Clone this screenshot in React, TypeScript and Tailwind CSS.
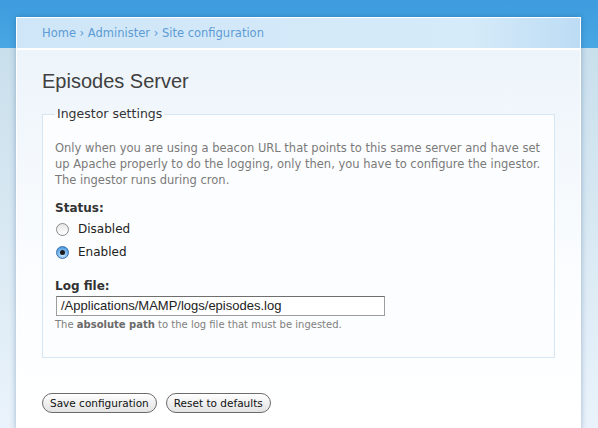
import React from 'react';

const Radio = ({ checked }: { checked?: boolean }) => (
  <span
    className={`flex h-[13px] w-[13px] items-center justify-center rounded-full border ${
      checked
        ? 'border-[#3a6fa8] bg-[radial-gradient(circle_at_50%_70%,#cfeaff_0%,#6fb2ec_55%,#2f7fd0_100%)]'
        : 'border-[#8a8a8a] bg-[linear-gradient(to_bottom,#e6e6e6,#ffffff)]'
    }`}
  >
    {checked && <span className="h-[5px] w-[5px] rounded-full bg-[#1a1a1a]" />}
  </span>
);

const PillButton = ({ label }: { label: string }) => (
  <button className="h-[20px] rounded-full border border-[#6b6b6b] bg-[linear-gradient(to_bottom,#ffffff,#f0f0f0_50%,#e3e3e3)] px-[7px] text-[10.5px] leading-[18px] text-[#111]">
    {label}
  </button>
);

export default function App() {
  return (
    <div className="h-[428px] w-[598px] overflow-hidden bg-[linear-gradient(to_bottom,#3e9cdf_0px,#49a7e3_48px,#c9dfec_48px,#eaf3fb_428px)] pt-[17px] font-['DejaVu_Sans',sans-serif]">
      <div className="ml-[16px] w-[565px] shadow-[0_0_6px_rgba(20,70,120,0.35)]">
        {/* Breadcrumb band */}
        <div className="h-[33px] border-x border-t border-white border-b-2 border-b-white bg-[linear-gradient(to_right,#cfe6f8,#d6ebf9_80%,#bcdcf4)] px-[25px] text-[11.5px] leading-[31px] text-[#5d9bd4]">
          Home › Administer › Site configuration
        </div>

        {/* Content */}
        <div className="h-[380px] border-x border-white bg-[linear-gradient(to_bottom,#edf4fa,#fbfdff_60%,#ffffff)] px-[25px] pt-[16px]">
          <h1 className="font-['Liberation_Sans',sans-serif] text-[20px] leading-[30px] text-[#404040]">
            Episodes Server
          </h1>

          <fieldset className="mt-[10px] h-[252px] border border-[#d6e6f3] bg-[#fcfdfe] px-[12px]">
            <legend className="px-[2px] text-[12.5px] leading-[16px] text-[#333]">Ingestor settings</legend>
            <p className="mt-[18px] text-[11.5px] leading-[16px] text-[#7a7a7a]">
              Only when you are using a beacon URL that points to this same server and have set up Apache properly to do the logging, only then, you have to configure the ingestor. The ingestor runs during cron.
            </p>

            <div className="mt-[12px] text-[12px] font-bold leading-[16px] text-[#333]">Status:</div>
            <div className="mt-[6px] flex flex-col gap-[9px] pl-[1px] text-[12px] leading-[14px] text-[#222]">
              <label className="flex items-center gap-[9px]">
                <Radio />
                Disabled
              </label>
              <label className="flex items-center gap-[9px]">
                <Radio checked />
                Enabled
              </label>
            </div>

            <div className="mt-[19px] text-[12px] font-bold leading-[16px] text-[#333]">Log file:</div>
            <div className="mt-[2px] ml-[1px] h-[20px] w-[329px] border border-[#9d9d9d] border-t-[#6f6f6f] bg-white px-[4px] font-['Liberation_Sans',sans-serif] text-[13px] leading-[18px] text-[#222]">
              /Applications/MAMP/logs/episodes.log
            </div>
            <div className="mt-[2px] text-[10px] leading-[14px] text-[#808080]">
              The <span className="font-bold text-[#6a6a6a]">absolute path</span> to the log file that must be ingested.
            </div>
          </fieldset>

          <div className="mt-[35px] flex gap-[9px]">
            <PillButton label="Save configuration" />
            <PillButton label="Reset to defaults" />
          </div>
        </div>
      </div>
    </div>
  );
}
